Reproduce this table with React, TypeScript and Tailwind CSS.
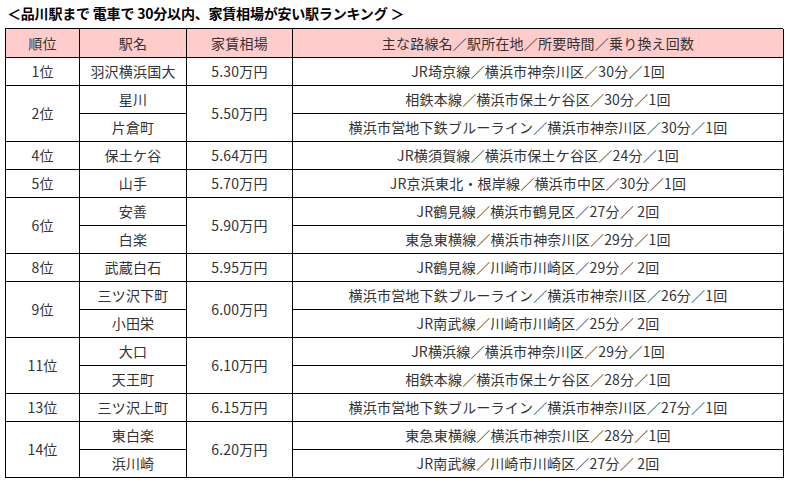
const groups: { rank: string; price: string; items: { station: string; route: string }[] }[] = [
  { rank: '1位', price: '5.30万円', items: [{ station: '羽沢横浜国大', route: 'JR埼京線／横浜市神奈川区／30分／1回' }] },
  {
    rank: '2位',
    price: '5.50万円',
    items: [
      { station: '星川', route: '相鉄本線／横浜市保土ケ谷区／30分／1回' },
      { station: '片倉町', route: '横浜市営地下鉄ブルーライン／横浜市神奈川区／30分／1回' },
    ],
  },
  { rank: '4位', price: '5.64万円', items: [{ station: '保土ケ谷', route: 'JR横須賀線／横浜市保土ケ谷区／24分／1回' }] },
  { rank: '5位', price: '5.70万円', items: [{ station: '山手', route: 'JR京浜東北・根岸線／横浜市中区／30分／1回' }] },
  {
    rank: '6位',
    price: '5.90万円',
    items: [
      { station: '安善', route: 'JR鶴見線／横浜市鶴見区／27分／ 2回' },
      { station: '白楽', route: '東急東横線／横浜市神奈川区／29分／1回' },
    ],
  },
  { rank: '8位', price: '5.95万円', items: [{ station: '武蔵白石', route: 'JR鶴見線／川崎市川崎区／29分／ 2回' }] },
  {
    rank: '9位',
    price: '6.00万円',
    items: [
      { station: '三ツ沢下町', route: '横浜市営地下鉄ブルーライン／横浜市神奈川区／26分／1回' },
      { station: '小田栄', route: 'JR南武線／川崎市川崎区／25分／ 2回' },
    ],
  },
  {
    rank: '11位',
    price: '6.10万円',
    items: [
      { station: '大口', route: 'JR横浜線／横浜市神奈川区／29分／1回' },
      { station: '天王町', route: '相鉄本線／横浜市保土ケ谷区／28分／1回' },
    ],
  },
  { rank: '13位', price: '6.15万円', items: [{ station: '三ツ沢上町', route: '横浜市営地下鉄ブルーライン／横浜市神奈川区／27分／1回' }] },
  {
    rank: '14位',
    price: '6.20万円',
    items: [
      { station: '東白楽', route: '東急東横線／横浜市神奈川区／28分／1回' },
      { station: '浜川崎', route: 'JR南武線／川崎市川崎区／27分／ 2回' },
    ],
  },
];

const cell = 'flex items-center justify-center border-r border-b border-black whitespace-pre';

export default function App() {
  return (
    <div className="w-[790px] h-[484px] bg-white text-[14px] text-[#333] font-['Noto_Sans_CJK_JP',sans-serif]">
      {/* Title */}
      <div className="h-[28px] flex items-center pl-[7px] pb-[1px] text-black font-bold tracking-[-0.2px]">
        ＜品川駅まで 電車で 30分以内、家賃相場が安い駅ランキング ＞
      </div>

      {/* Table */}
      <div className="ml-[5px] w-[778px] grid grid-cols-[74px_107px_106px_491px] grid-rows-[29px_repeat(15,28px)] border-l border-t border-black tracking-[0.2px]">
        {['順位', '駅名', '家賃相場', '主な路線名／駅所在地／所要時間／乗り換え回数'].map((h) => (
          <div key={h} className={`${cell} bg-[#ffcccc]`}>
            {h}
          </div>
        ))}
        {groups.map((g) =>
          g.items.length === 2
            ? [
                <div key={g.rank + 'r'} className={`${cell} row-span-2`}>{g.rank}</div>,
                <div key={g.rank + 's1'} className={cell}>{g.items[0].station}</div>,
                <div key={g.rank + 'p'} className={`${cell} row-span-2`}>{g.price}</div>,
                <div key={g.rank + 'a1'} className={cell}>{g.items[0].route}</div>,
                <div key={g.rank + 's2'} className={cell}>{g.items[1].station}</div>,
                <div key={g.rank + 'a2'} className={cell}>{g.items[1].route}</div>,
              ]
            : [
                <div key={g.rank + 'r'} className={cell}>{g.rank}</div>,
                <div key={g.rank + 's1'} className={cell}>{g.items[0].station}</div>,
                <div key={g.rank + 'p'} className={cell}>{g.price}</div>,
                <div key={g.rank + 'a1'} className={cell}>{g.items[0].route}</div>,
              ]
        )}
      </div>
    </div>
  );
}
